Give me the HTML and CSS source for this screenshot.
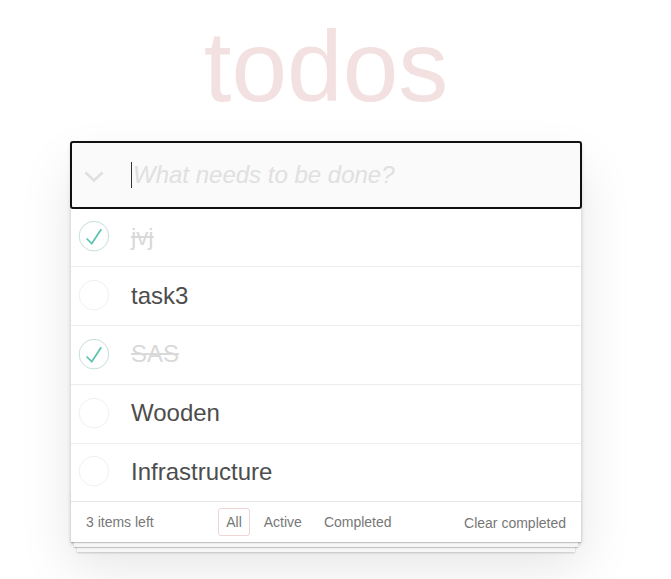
FILE: index.html
```html
<!DOCTYPE html>
<html lang="en">
<head>
<meta charset="utf-8">
<title>todos</title>
<link rel="stylesheet" href="styles.css">
</head>
<body>
<div class="app">
  <h1 class="title">todos</h1>
  <section class="main">
    <div class="new-todo">
      <span class="toggle-all">
        <svg width="20" height="12" viewBox="0 0 20 12"><polyline points="1.5,1.5 10,9.5 18.5,1.5" fill="none" stroke="#e0e0e0" stroke-width="2.6"/></svg>
      </span>
      <span class="caret"></span>
      <span class="placeholder">What needs to be done?</span>
    </div>
    <ul class="todo-list">
      <li class="done">
        <svg class="toggle" width="40" height="40" viewBox="-10 -18 100 135"><circle cx="50" cy="50" r="50" fill="none" stroke="#bddad5" stroke-width="3"/><path fill="#5dc2af" d="M72 25L42 71 27 56l-4 4 20 20 34-52z"/></svg>
        <label>jvj</label>
      </li>
      <li>
        <svg class="toggle" width="40" height="40" viewBox="-10 -18 100 135"><circle cx="50" cy="50" r="50" fill="none" stroke="#ededed" stroke-width="3"/></svg>
        <label>task3</label>
      </li>
      <li class="done">
        <svg class="toggle" width="40" height="40" viewBox="-10 -18 100 135"><circle cx="50" cy="50" r="50" fill="none" stroke="#bddad5" stroke-width="3"/><path fill="#5dc2af" d="M72 25L42 71 27 56l-4 4 20 20 34-52z"/></svg>
        <label>SAS</label>
      </li>
      <li>
        <svg class="toggle" width="40" height="40" viewBox="-10 -18 100 135"><circle cx="50" cy="50" r="50" fill="none" stroke="#ededed" stroke-width="3"/></svg>
        <label>Wooden</label>
      </li>
      <li>
        <svg class="toggle" width="40" height="40" viewBox="-10 -18 100 135"><circle cx="50" cy="50" r="50" fill="none" stroke="#ededed" stroke-width="3"/></svg>
        <label>Infrastructure</label>
      </li>
    </ul>
    <footer class="footer">
      <span class="count">3 items left</span>
      <ul class="filters">
        <li><a class="selected">All</a></li>
        <li><a>Active</a></li>
        <li><a>Completed</a></li>
      </ul>
      <span class="clear">Clear completed</span>
    </footer>
  </section>
</div>
</body>
</html>
```
FILE: styles.css
```css
html, body {
  margin: 0;
  padding: 0;
}
body {
  background: #fff;
  font-family: "Liberation Sans", Arial, sans-serif;
  color: #4d4d4d;
  min-height: 579px;
}
.app {
  width: 510px;
  margin: 0 0 0 71px;
  padding-bottom: 40px;
}
.title {
  margin: 0 0 26px 0;
  padding-top: 16px;
  height: 100px;
  line-height: 100px;
  font-size: 100px;
  font-weight: normal;
  text-align: center;
  color: rgba(175, 47, 47, 0.15);
}
.main {
  position: relative;
  background: #fff;
  box-shadow: 0 2px 4px 0 rgba(0,0,0,0.2), 0 25px 50px 0 rgba(0,0,0,0.1);
}
.new-todo {
  position: relative;
  z-index: 2;
  display: flex;
  align-items: center;
  height: 66.4px;
  box-sizing: border-box;
  padding: 16px 16px 16px 0;
  background: #fafafa;
  border-radius: 2px;
  outline: 2px solid #111;
  outline-offset: -1px;
}
.toggle-all {
  width: 60px;
  flex: 0 0 60px;
  display: flex;
  padding-top: 3px;
}
.toggle-all svg {
  margin-left: 13px;
  display: block;
}
.caret {
  width: 1px;
  height: 26px;
  background: #333;
  margin-top: -1px;
}
.placeholder {
  font-size: 24px;
  line-height: 33.6px;
  font-style: italic;
  color: #e0e0e0;
  margin-left: 1px;
}
.todo-list {
  list-style: none;
  margin: 0;
  padding: 0;
}
.todo-list li {
  display: flex;
  align-items: center;
  border-bottom: 1px solid #ededed;
}
.todo-list li:last-child {
  border-bottom: none;
}
.toggle {
  flex: 0 0 40px;
  display: block;
  margin-top: -2px;
}
.todo-list label {
  display: block;
  font-size: 24px;
  line-height: 28.8px;
  padding: 14.5px 15px 14.5px 20px;
  color: #4d4d4d;
}
.todo-list li.done label {
  color: #d9d9d9;
  text-decoration: line-through;
}
.footer {
  position: relative;
  display: flex;
  justify-content: space-between;
  align-items: center;
  height: 20px;
  padding: 10px 15px;
  border-top: 1px solid #e6e6e6;
  font-size: 14px;
  color: #777;
}
.footer::before {
  content: '';
  position: absolute;
  right: 0;
  bottom: 0;
  left: 0;
  height: 50px;
  overflow: hidden;
  box-shadow: 0 1px 1px rgba(0,0,0,0.2),
              0 8px 0 -3px #f6f6f6,
              0 9px 1px -3px rgba(0,0,0,0.2),
              0 16px 0 -6px #f6f6f6,
              0 17px 2px -6px rgba(0,0,0,0.2);
  pointer-events: none;
}
.count {
  line-height: 20px;
}
.filters {
  list-style: none;
  margin: 0;
  padding: 0;
  display: flex;
}
.filters a {
  display: block;
  margin: 3px;
  padding: 3px 7px;
  line-height: 20px;
  color: #777;
  border: 1px solid transparent;
  border-radius: 3px;
}
.filters a.selected {
  border-color: rgba(175, 47, 47, 0.2);
}
.clear {
  line-height: 20px;
  color: #777;
  position: relative;
  top: 1px;
}
```
